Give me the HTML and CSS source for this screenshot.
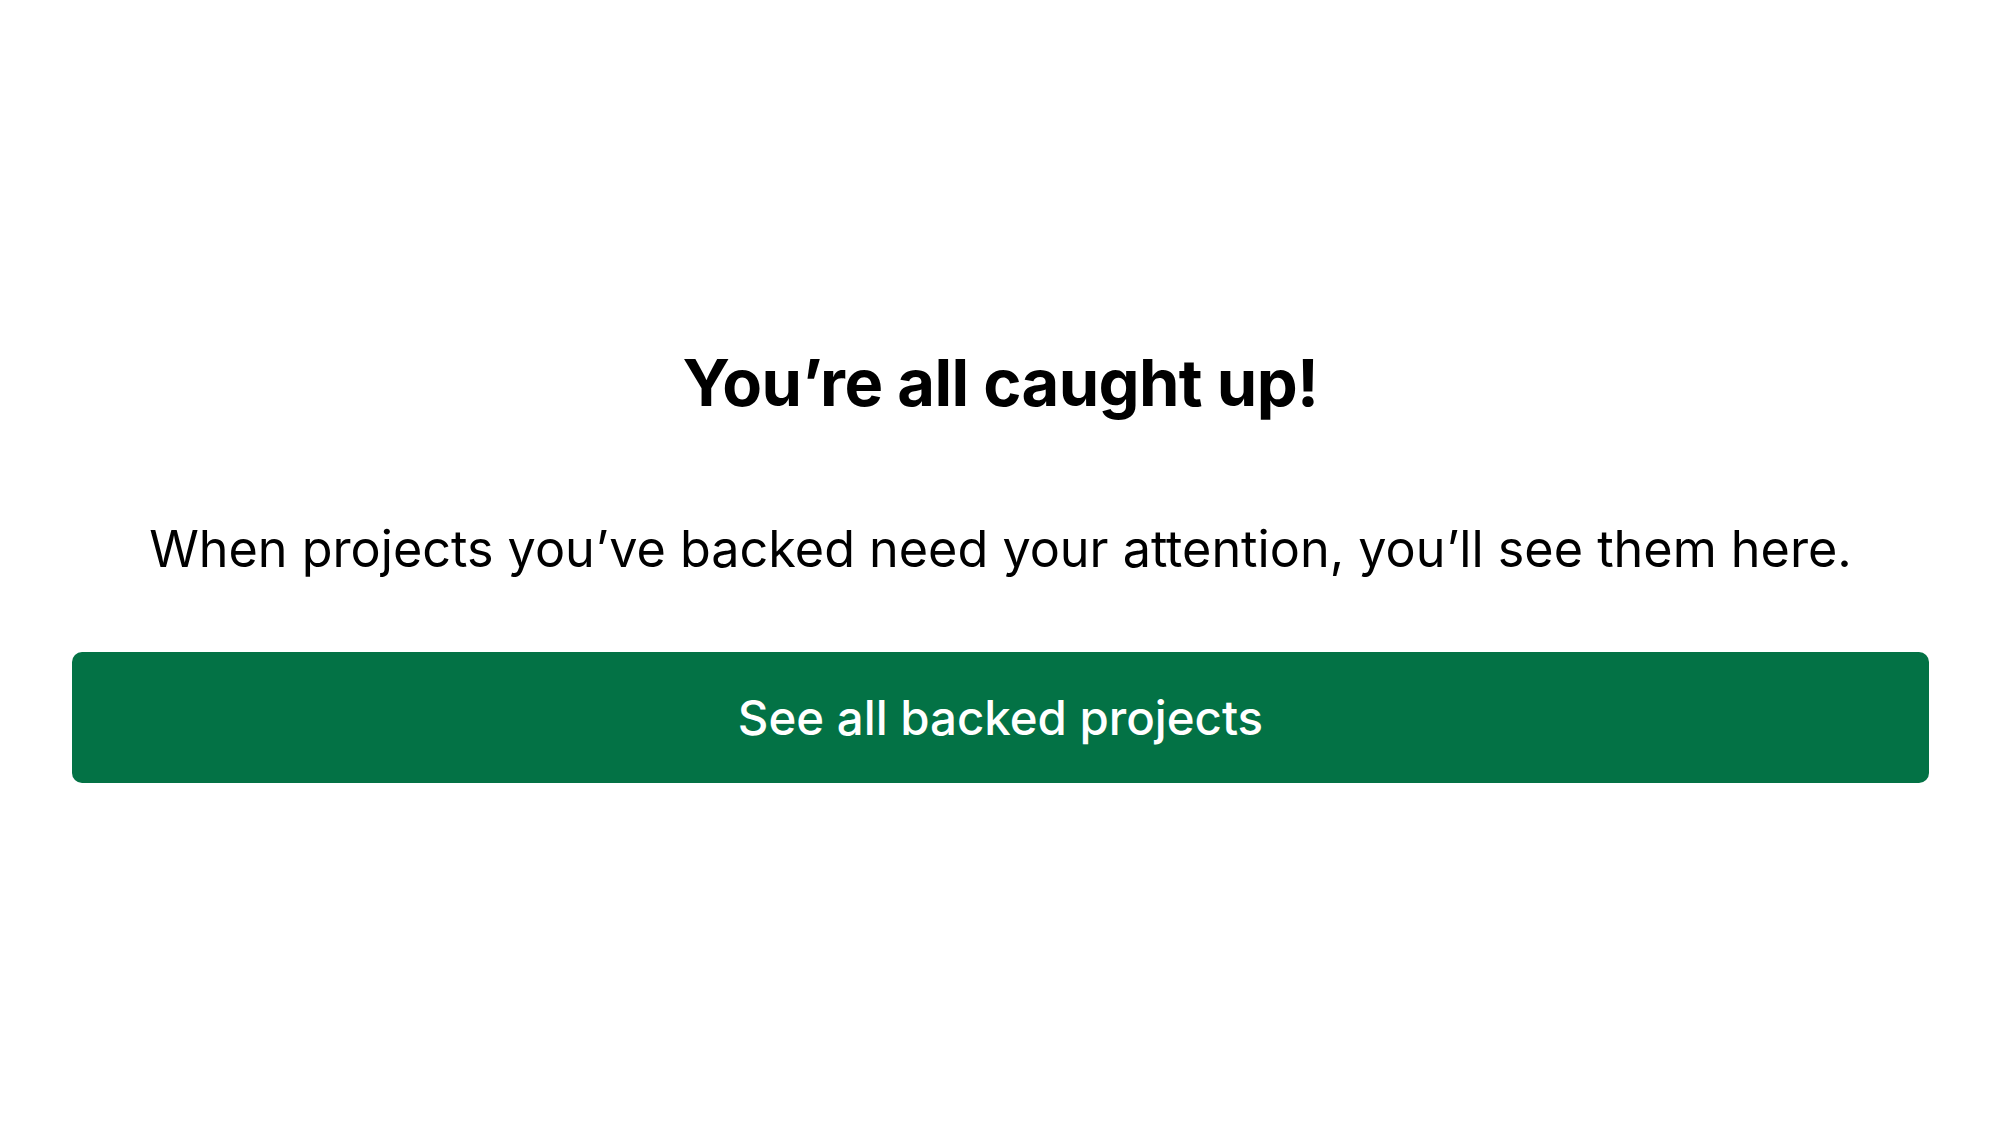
FILE: index.html
```html
<!DOCTYPE html>
<html lang="en">
<head>
<meta charset="utf-8">
<link rel="stylesheet" href="styles.css">
<title>Caught up</title>
</head>
<body>
<main class="empty">
  <h1 class="empty-title">You’re all caught up!</h1>
  <p class="empty-text">When projects you’ve backed need your attention, you’ll see them here.</p>
  <a class="empty-button" href="#">See all backed projects</a>
</main>
</body>
</html>
```

FILE: styles.css
```css
html, body {
  margin: 0;
  padding: 0;
  background: #ffffff;
  height: 100%;
}
body {
  font-family: Inter, "Noto Sans", sans-serif;
  color: #000;
}
.empty {
  box-sizing: border-box;
  height: 1125px;
  padding: 0 72px;
  display: flex;
  flex-direction: column;
  align-items: stretch;
  justify-content: center;
  text-align: center;
}
.empty-title {
  margin: 0;
  font-size: 65px;
  font-weight: 700;
  line-height: 80px;
  letter-spacing: -0.6px;
}
.empty-text {
  margin: 94px 0 0;
  font-size: 50.3px;
  font-weight: 400;
  line-height: 64px;
}
.empty-button {
  margin-top: 71px;
  display: flex;
  align-items: center;
  justify-content: center;
  height: 131px;
  border-radius: 10px;
  background: #037245;
  color: #fff;
  text-decoration: none;
  font-size: 47.4px;
  font-weight: 500;
}
```
